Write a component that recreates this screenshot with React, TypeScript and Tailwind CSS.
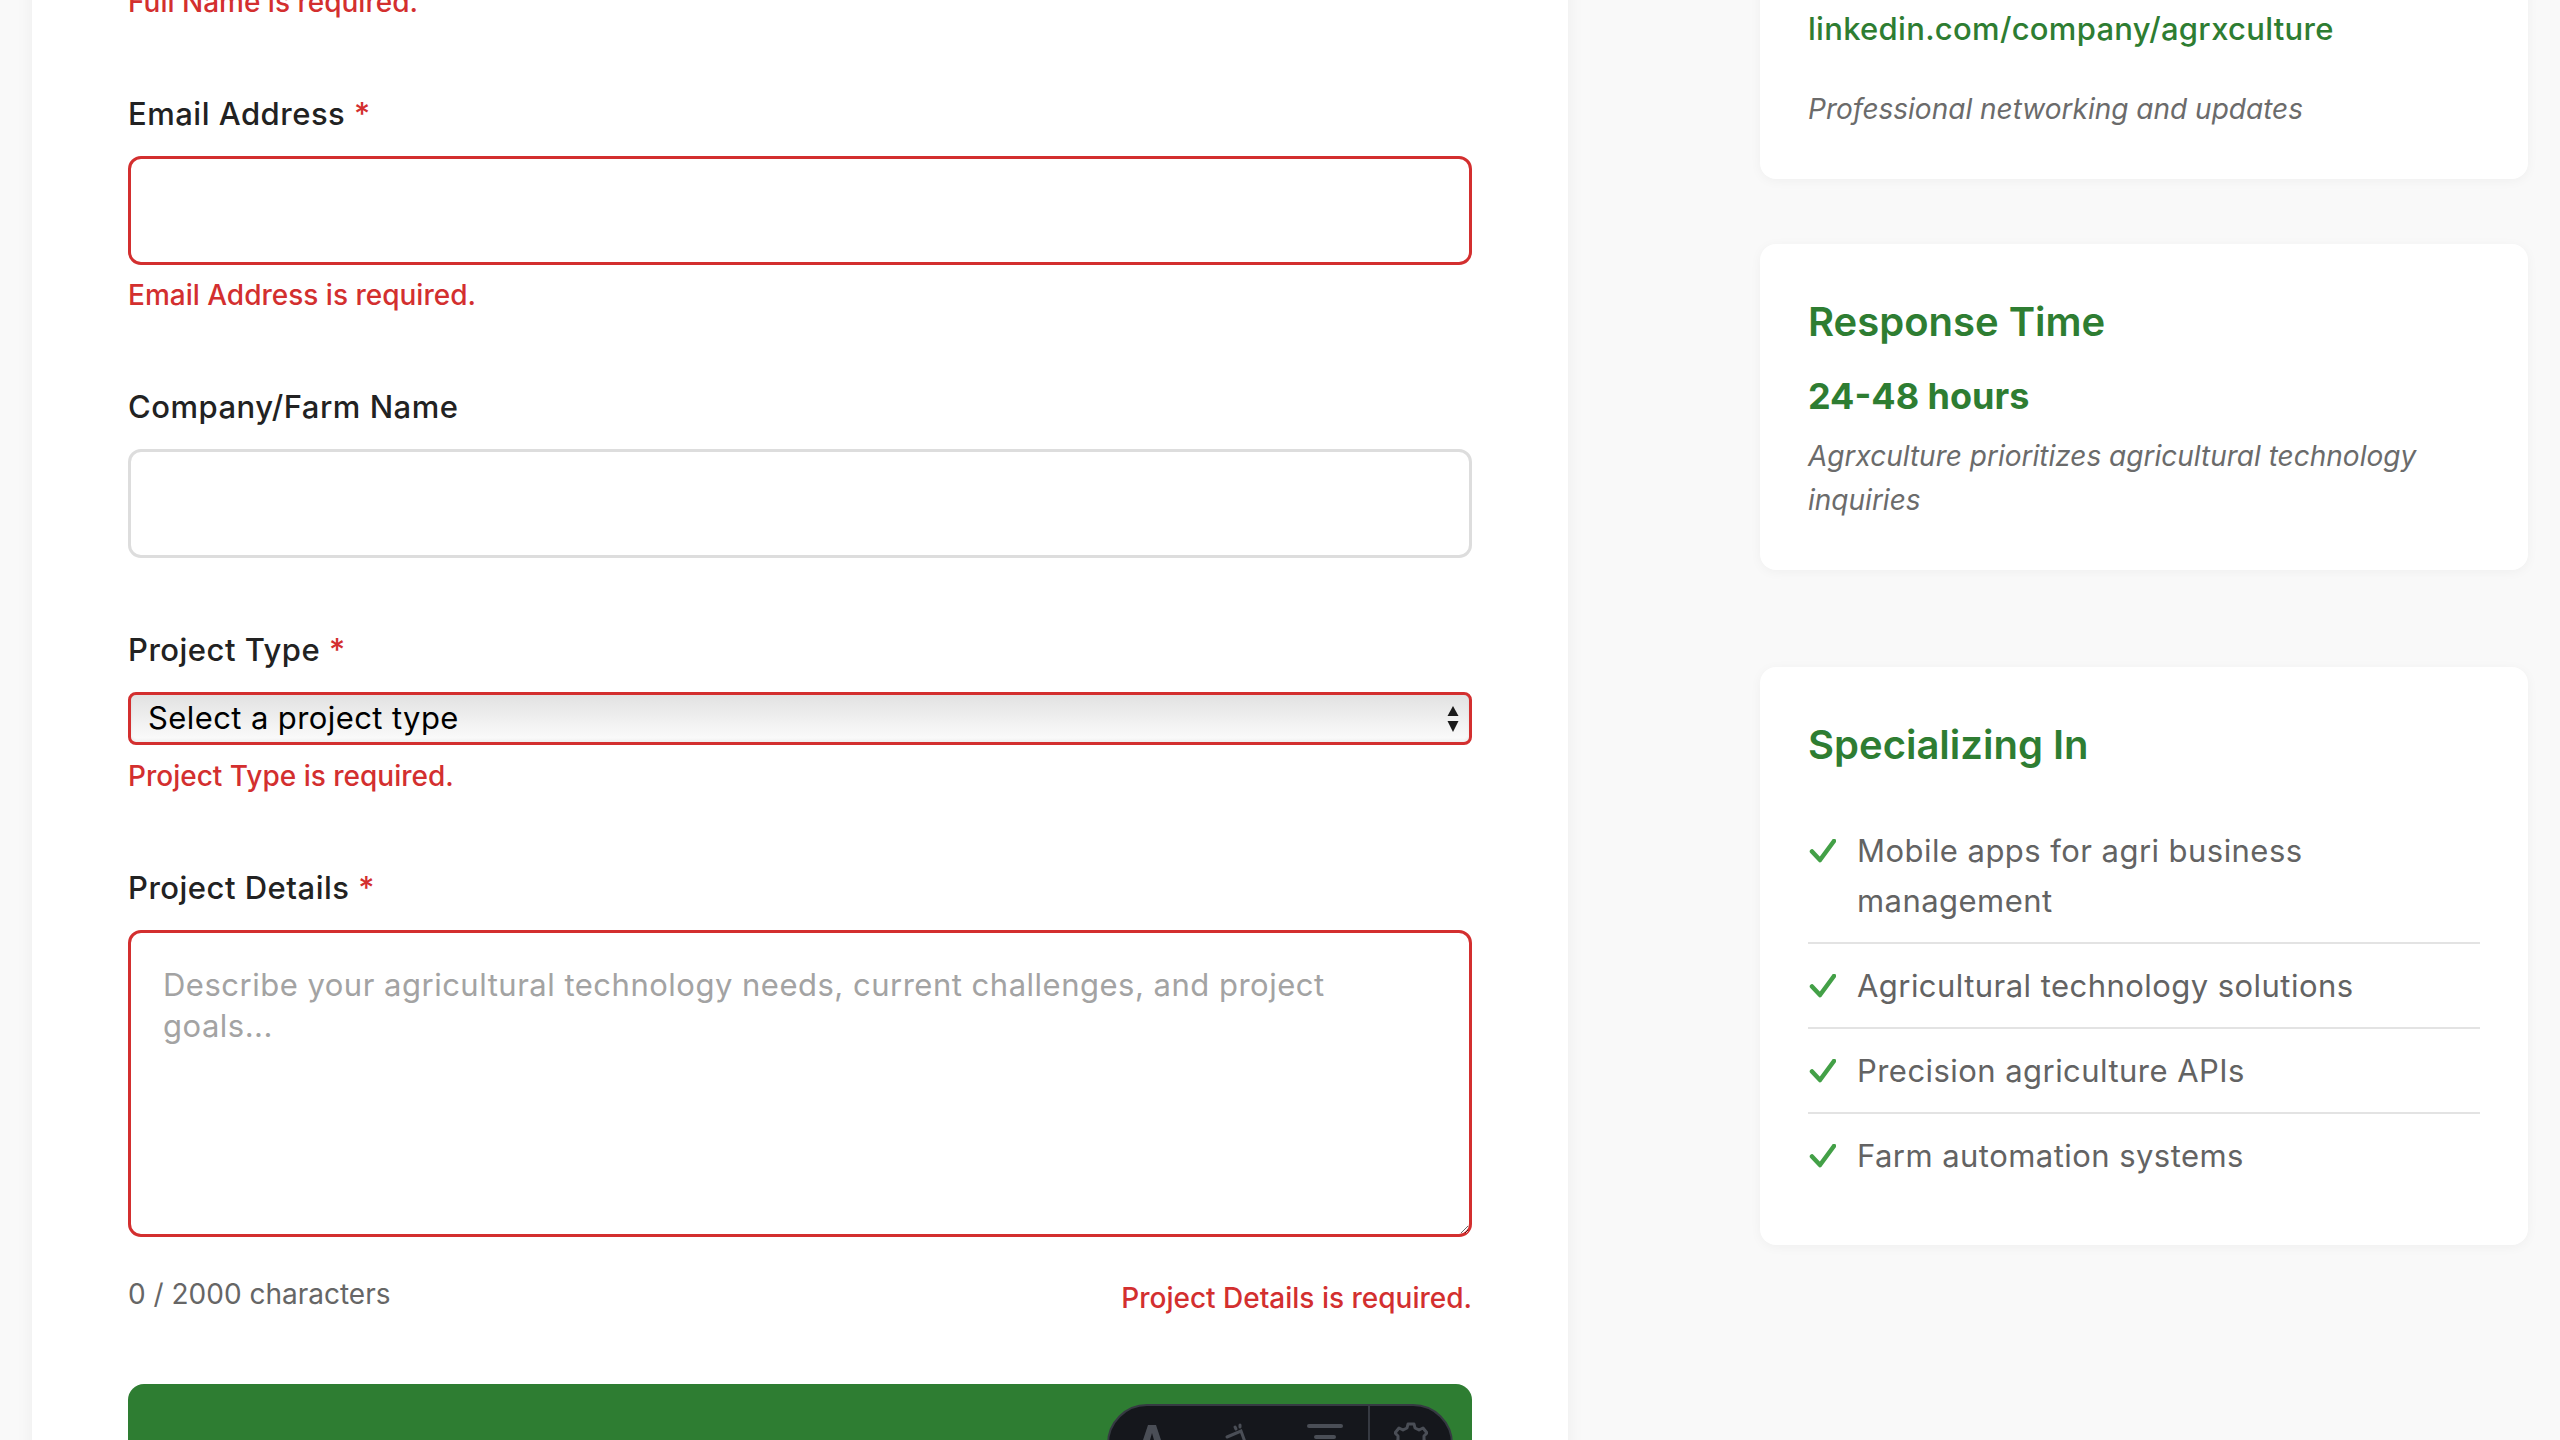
import React from 'react';

const RED = 'text-[#d32f2f]';

interface FieldProps {
  label: string;
  required?: boolean;
  error?: string;
  children: React.ReactNode;
}

const Label: React.FC<{ label: string; required?: boolean }> = ({ label, required }) => (
  <label className="block text-[31px] leading-[45px] tracking-[0.5px] font-medium text-[#222222] mb-5">
    {label}
    {required && <span className={RED}> *</span>}
  </label>
);

const Field: React.FC<FieldProps> = ({ label, required, error, children }) => (
  <div className="mb-[69px]">
    <Label label={label} required={required} />
    {children}
    {error && (
      <p className={`mt-[11.5px] text-[28px] leading-[39px] font-medium ${RED}`}>{error}</p>
    )}
  </div>
);

const Check = () => (
  <span className="w-[28px] h-[50px] shrink-0 flex items-center">
    <svg width="28" height="24" viewBox="0 0 28 24" fill="none">
      <path d="M4 12.5 L12 21 L26 2" stroke="#43a047" strokeWidth="4.5" strokeLinecap="round" strokeLinejoin="round" />
    </svg>
  </span>
);

const specialties = [
  'Mobile apps for agri business management',
  'Agricultural technology solutions',
  'Precision agriculture APIs',
  'Farm automation systems',
];

const inputBase =
  'block w-full bg-white rounded-[13px] border-[3px] px-8 text-[31px] text-[#222] outline-none';

export default function App() {
  return (
    <div className="relative h-screen overflow-hidden bg-[#f9f9f9] font-[Inter,sans-serif]">
      <div className="grid grid-cols-[2fr_1fr] gap-x-[192px] items-start px-8 -mt-[299px]">
        {/* form card */}
        <div className="bg-white rounded-2xl shadow-[0_0_18px_rgba(0,0,0,0.05)] p-24">
          <form onSubmit={(e) => e.preventDefault()}>
            <Field label="Full Name" required error="Full Name is required.">
              <input className={`${inputBase} h-[109px] border-[#d32f2f]`} />
            </Field>

            <Field label="Email Address" required error="Email Address is required.">
              <input type="email" className={`${inputBase} h-[109px] border-[#d32f2f]`} />
            </Field>

            <Field label="Company/Farm Name">
              <input className={`${inputBase} h-[109px] border-[#dddddd]`} />
            </Field>

            <Field label="Project Type" required error="Project Type is required.">
              <div className="relative">
                <select
                  defaultValue=""
                  className="block w-full h-[53px] appearance-none rounded-[8px] border-[3px] border-[#d32f2f] bg-linear-to-b from-[#e2e2e2] to-[#fcfcfc] pl-[17px] pr-12 text-[31px] tracking-[0.4px] text-black shadow-[inset_0_-2px_3px_rgba(0,0,0,0.06)] outline-none"
                >
                  <option value="" disabled>
                    Select a project type
                  </option>
                  <option>Mobile App Development</option>
                  <option>Web Platform</option>
                  <option>API Integration</option>
                </select>
                <svg
                  className="absolute right-[13px] top-1/2 -translate-y-1/2 pointer-events-none"
                  width="12"
                  height="28"
                  viewBox="0 0 12 28"
                >
                  <path d="M6 1 L11.5 11 L0.5 11 Z" fill="#1a1a1a" />
                  <path d="M0.5 16 L11.5 16 L6 27 Z" fill="#1a1a1a" />
                </svg>
              </div>
            </Field>

            <div>
              <Label label="Project Details" required />
              <textarea
                className={`${inputBase} h-[307px] border-[#d32f2f] pt-[31px] leading-[41px] tracking-[0.5px] resize-y placeholder:text-[#a3a3a3]`}
                placeholder="Describe your agricultural technology needs, current challenges, and project goals..."
              />
              <div className="mt-[37px] flex justify-between items-start">
                <span className="text-[28px] leading-[40px] text-[#666666]">0 / 2000 characters</span>
                <span className={`mt-[5px] text-[28px] leading-[39px] font-medium ${RED}`}>
                  Project Details is required.
                </span>
              </div>
            </div>

            <button
              type="submit"
              className="mt-[66px] w-full h-[140px] rounded-[16px] bg-[#2e7d32] text-white text-[30px] font-semibold"
            >
              Send Message
            </button>
          </form>
        </div>

        {/* sidebar */}
        <aside className="mt-[176px] flex flex-col">
          <div className="bg-white rounded-2xl shadow-[0_2px_12px_rgba(0,0,0,0.045)] p-12">
            <h3 className="text-[40px] leading-[59px] font-semibold text-[#2e7d32]">LinkedIn</h3>
            <a className="mt-5 block text-[31px] leading-[50px] tracking-[0.3px] font-medium text-[#2e7d32]">
              linkedin.com/company/agrxculture
            </a>
            <p className="mt-[33px] text-[28px] leading-[44px] italic text-[#6b6b6b]">
              Professional networking and updates
            </p>
          </div>

          <div className="mt-[65px] bg-white rounded-2xl shadow-[0_2px_12px_rgba(0,0,0,0.045)] p-12">
            <h3 className="text-[40px] leading-[59px] font-semibold text-[#2e7d32]">Response Time</h3>
            <p className="mt-5 text-[36px] leading-[51px] font-bold text-[#2e7d32]">24-48 hours</p>
            <p className="mt-3 text-[28px] leading-[44px] italic text-[#6b6b6b]">
              Agrxculture prioritizes agricultural technology inquiries
            </p>
          </div>

          <div className="mt-[97px] bg-white rounded-2xl shadow-[0_2px_12px_rgba(0,0,0,0.045)] p-12">
            <h3 className="text-[40px] leading-[59px] font-semibold text-[#2e7d32]">Specializing In</h3>
            <ul className="mt-[35px]">
              {specialties.map((s) => (
                <li
                  key={s}
                  className="flex gap-[21px] py-[16.5px] border-b-2 border-[#e3e3e3] last:border-b-0 text-[31px] leading-[50px] tracking-[0.45px] text-[#636363]"
                >
                  <Check />
                  <span>{s}</span>
                </li>
              ))}
            </ul>
          </div>
        </aside>
      </div>

      {/* dev toolbar peeking from the bottom */}
      <div className="fixed left-1/2 -translate-x-1/2 bottom-[-44px] w-[346px] h-[80px] rounded-full bg-[#15171c] border-2 border-[#363a42] flex">
        <div className="flex w-[259px] pt-[17px]">
          <div className="w-[86px] flex justify-center">
            <svg width="30" height="34" viewBox="0 0 30 34">
              <path d="M11 2 h8 l10 30 h-7 l-3-9 h-8 l-3 9 h-7 z M13 17 h4 l-2-7 z" fill="#4a4e56" fillRule="evenodd" />
            </svg>
          </div>
          <div className="w-[86px] flex justify-center">
            <svg width="34" height="34" viewBox="0 0 34 34" fill="none" stroke="#4a4e56" strokeWidth="3" strokeLinecap="round">
              <path d="M6 14 L20 8 L28 30" />
              <path d="M14 4 L15 6 M19 2 L19 4" />
            </svg>
          </div>
          <div className="w-[87px] flex justify-center">
            <svg width="38" height="34" viewBox="0 0 38 34" fill="none" stroke="#4a4e56" strokeWidth="4" strokeLinecap="round">
              <path d="M3 3 H35" />
              <path d="M10 14 H28" />
            </svg>
          </div>
        </div>
        <div className="w-[2px] bg-[#363a42]" />
        <div className="flex-1 flex justify-center pt-[15px]">
          <svg width="34" height="34" viewBox="0 0 34 34" fill="none" stroke="#4a4e56" strokeWidth="3" strokeLinejoin="round">
            <path d="M14 3 h6 l1 4 l4 2 l4-2 l4 5 l-3 3 v4 l3 3 l-4 5 l-4-2 l-4 2 l-1 4 h-6 l-1-4 l-4-2 l-4 2 l-4-5 l3-3 v-4 l-3-3 l4-5 l4 2 l4-2 z" />
          </svg>
        </div>
      </div>
    </div>
  );
}
